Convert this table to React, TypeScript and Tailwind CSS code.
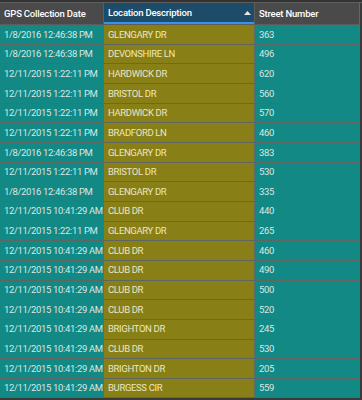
import React from "react";

type Row = {
  date: string;
  location: string;
  number: string;
};

const rows: Row[] = [
  { date: "1/8/2016 12:46:38 PM", location: "GLENGARY DR", number: "363" },
  { date: "1/8/2016 12:46:38 PM", location: "DEVONSHIRE LN", number: "496" },
  { date: "12/11/2015 1:22:11 PM", location: "HARDWICK DR", number: "620" },
  { date: "12/11/2015 1:22:11 PM", location: "BRISTOL DR", number: "560" },
  { date: "12/11/2015 1:22:11 PM", location: "HARDWICK DR", number: "570" },
  { date: "12/11/2015 1:22:11 PM", location: "BRADFORD LN", number: "460" },
  { date: "1/8/2016 12:46:38 PM", location: "GLENGARY DR", number: "383" },
  { date: "12/11/2015 1:22:11 PM", location: "BRISTOL DR", number: "530" },
  { date: "1/8/2016 12:46:38 PM", location: "GLENGARY DR", number: "335" },
  { date: "12/11/2015 10:41:29 AM", location: "CLUB DR", number: "440" },
  { date: "12/11/2015 1:22:11 PM", location: "GLENGARY DR", number: "265" },
  { date: "12/11/2015 10:41:29 AM", location: "CLUB DR", number: "460" },
  { date: "12/11/2015 10:41:29 AM", location: "CLUB DR", number: "490" },
  { date: "12/11/2015 10:41:29 AM", location: "CLUB DR", number: "500" },
  { date: "12/11/2015 10:41:29 AM", location: "CLUB DR", number: "520" },
  { date: "12/11/2015 10:41:29 AM", location: "BRIGHTON DR", number: "245" },
  { date: "12/11/2015 10:41:29 AM", location: "CLUB DR", number: "530" },
  { date: "12/11/2015 10:41:29 AM", location: "BRIGHTON DR", number: "205" },
  { date: "12/11/2015 10:41:29 AM", location: "BURGESS CIR", number: "559" },
];

const App = () => {
  return (
    <div
      className="w-[362px] h-[400px] overflow-hidden bg-[#3a3a3a] text-[9.5px] leading-none"
      style={{ fontFamily: 'Roboto, "Noto Sans", sans-serif' }}
    >
      {/* top strip */}
      <div className="h-[3px] bg-[#333333] border-b border-[#5e5e5e]" />
      <div className="w-[360px] border-r border-[#666666]">
        {/* header */}
        <div className="grid grid-cols-[103px_150px_1fr] gap-x-px bg-[#5c5c5c] h-[21px] tracking-[-0.2px]">
          <div className="bg-[#4a4a4a] text-white font-medium pl-[4px] flex items-center whitespace-nowrap overflow-hidden">
            GPS Collection Date
          </div>
          <div className="bg-[#1d4b6a] text-white font-medium pl-[4px] flex items-center justify-between pr-[3px] border-b-2 border-[#3a93e6] whitespace-nowrap">
            <span>Location Description</span>
            <svg width="7" height="4" viewBox="0 0 7 4">
              <polygon points="0,4 3.5,0 7,4" fill="#e8e8e8" />
            </svg>
          </div>
          <div className="bg-[#4a4a4a] text-white font-medium pl-[4px] flex items-center whitespace-nowrap">
            Street Number
          </div>
        </div>
        {/* body */}
        <div className="flex flex-col border-t border-[#5c5c5c] tracking-[-0.35px]">
          {rows.map((row, index) => (
            <div
              key={index}
              className="grid grid-cols-[103px_150px_1fr] gap-x-px bg-[#5e6a66] h-[19.66px] shrink-0 border-b-[1.6px] border-[#5d6660]"
            >
              <div className="bg-[#128985] text-[#dbe7e4] pl-[4px] flex items-center whitespace-nowrap overflow-hidden">
                {row.date}
              </div>
              <div className="bg-[#887f16] text-[#ece6c4] pl-[4px] flex items-center whitespace-nowrap overflow-hidden">
                {row.location}
              </div>
              <div className="bg-[#128985] text-[#dbe7e4] pl-[4px] flex items-center whitespace-nowrap overflow-hidden">
                {row.number}
              </div>
            </div>
          ))}
        </div>
      </div>
    </div>
  );
};

export default App;
